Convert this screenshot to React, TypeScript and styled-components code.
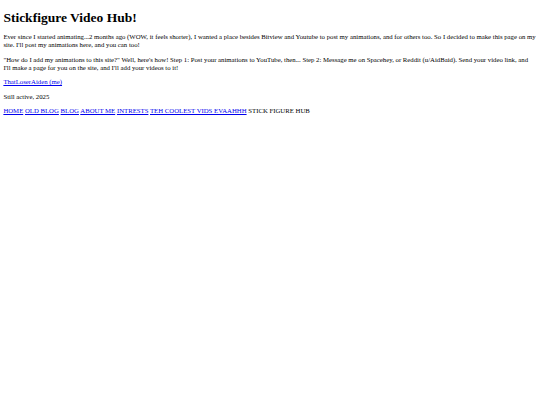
import React from "react";
import styled, { createGlobalStyle } from "styled-components";

const Global = createGlobalStyle`
  html, body { background: #fff; }
  body {
    margin: 3.375px;
    font-family: "Liberation Serif", "Times New Roman", serif;
    font-size: 6.75px;
    line-height: 8px;
    color: #000;
  }
`;

const Title = styled.h1`
  font-size: 13.5px;
  line-height: 15px;
  font-weight: bold;
  margin: 7px 0 8px;
`;

const Para = styled.p`
  margin: 6.5px 0;
`;

const Link = styled.a`
  color: #0000ee;
  text-decoration: underline;
`;

const Nav = styled.div`
  margin: 6.5px 0;
`;

const navItems = ["HOME", "OLD BLOG", "BLOG", "ABOUT ME", "INTRESTS", "TEH COOLEST VIDS EVAAHHH"];

export default function App() {
  return (
    <>
      <Global />
      <Title>Stickfigure Video Hub!</Title>
      <Para>
        Ever since I started animating...2 months ago (WOW, it feels shorter), I wanted a place besides Bitview and
        Youtube to post my animations, and for others too. So I decided to make this page on my site. I'll post my
        animations here, and you can too!
      </Para>
      <Para>
        "How do I add my animations to this site?" Well, here's how! Step 1: Post your animations to YouTube, then...
        Step 2: Message me on Spacehey, or Reddit (u/AidBaid). Send your video link, and I'll make a page for you on
        the site, and I'll add your videos to it!
      </Para>
      <Para>
        <Link href="#">ThatLoserAiden (me)</Link>
      </Para>
      <Para>Still active, 2025</Para>
      <Nav>
        {navItems.map((n) => (
          <React.Fragment key={n}>
            <Link href="#">{n}</Link>{" "}
          </React.Fragment>
        ))}
        STICK FIGURE HUB
      </Nav>
    </>
  );
}
